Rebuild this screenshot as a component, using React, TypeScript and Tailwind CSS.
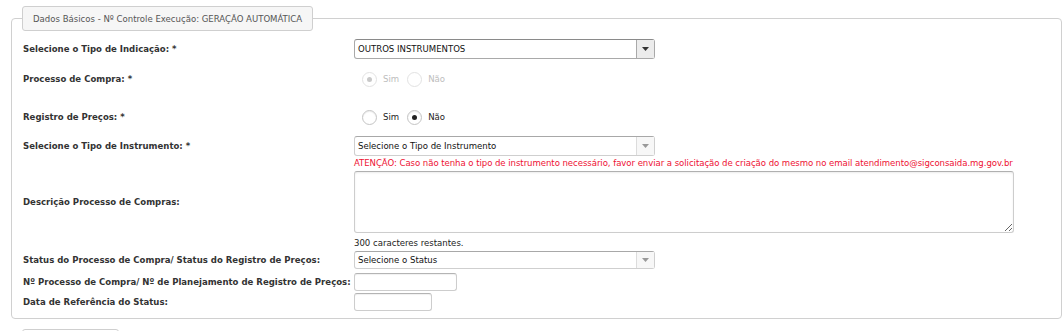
function Radio({ label, checked, disabled }: { label: string; checked?: boolean; disabled?: boolean }) {
    return (
        <label className="flex items-center">
            <span className={`flex h-[15px] w-[15px] items-center justify-center rounded-full border bg-white ${disabled ? 'border-[#e2e2e2]' : 'border-[#c4c4c4] shadow-[inset_0_1px_1px_rgba(0,0,0,0.08)]'}`}>
                {checked && <span className={`h-[5px] w-[5px] rounded-full ${disabled ? 'bg-[#c8c8c8]' : 'bg-[#222]'}`} />}
            </span>
            <span className={`ml-[6px] ${disabled ? 'text-[#bdbdbd]' : 'text-[#222]'}`}>{label}</span>
        </label>
    );
}

function Select({ value, dark }: { value: string; dark?: boolean }) {
    return (
        <div className={`flex h-[20px] w-[301px] items-stretch rounded-[3px] border bg-white ${dark ? 'border-[#a9a9a9] border-t-[#8a8a8a]' : 'border-[#cfcfcf] border-t-[#a8a8a8]'}`}>
            <span className="flex flex-1 items-center pl-[3px] text-[#111]">{value}</span>
            <span className={`flex w-[18px] items-center justify-center border-l ${dark ? 'border-[#a9a9a9] bg-[#ececec]' : 'border-[#dcdcdc] bg-[#f7f7f7]'}`}>
                <svg width="7" height="4" viewBox="0 0 7 4">
                    <path d="M0 0h7L3.5 4z" fill={dark ? '#333' : '#999'} />
                </svg>
            </span>
        </div>
    );
}

function Row({ label, children, className = '' }: { label?: string; children?: React.ReactNode; className?: string }) {
    return (
        <div className={`flex items-center ${className}`}>
            <span className="w-[331px] shrink-0 font-bold text-[#333]">{label}</span>
            <div className="flex items-center">{children}</div>
        </div>
    );
}

export default function App() {
    const inputClass = 'h-[18px] rounded-[3px] border border-[#cdcdcd] border-t-[#b4b4b4] bg-white shadow-[inset_0_1px_1px_rgba(0,0,0,0.06)]';

    return (
        <div className="h-[331px] w-[1062px] overflow-hidden bg-white font-['DejaVu_Sans_Condensed',sans-serif] text-[9.5px] leading-[12px] text-[#333]">
            <fieldset className="mt-[6px] ml-[11px] w-[1051px] rounded-[4px] border border-[#d0d0d0] pl-[11px] pb-[7px]">
                <legend className="-ml-[1px] flex h-[25px] items-center rounded-[3px] border border-[#cfcfcf] bg-[#f6f6f6] px-[10px] text-[#555]">
                    Dados Básicos - Nº Controle Execução: GERAÇÃO AUTOMÁTICA
                </legend>

                <Row label="Selecione o Tipo de Indicação: *" className="mt-[8px] h-[20px]">
                    <Select value="OUTROS INSTRUMENTOS" dark />
                </Row>

                <Row label="Processo de Compra: *" className="mt-[10px] h-[20px]">
                    <div className="ml-[8px] flex items-center gap-[8px]">
                        <Radio label="Sim" checked disabled />
                        <Radio label="Não" disabled />
                    </div>
                </Row>

                <Row label="Registro de Preços: *" className="mt-[18px] h-[20px]">
                    <div className="ml-[8px] flex items-center gap-[8px]">
                        <Radio label="Sim" />
                        <Radio label="Não" checked />
                    </div>
                </Row>

                <Row label="Selecione o Tipo de Instrumento: *" className="mt-[9px] h-[20px]">
                    <Select value="Selecione o Tipo de Instrumento" />
                </Row>

                <Row className="h-[14px]">
                    <span className="whitespace-nowrap tracking-[-0.05px] text-[#ee1133]">
                        ATENÇÃO: Caso não tenha o tipo de instrumento necessário, favor enviar a solicitação de criação do mesmo no email atendimento@sigconsaida.mg.gov.br
                    </span>
                </Row>

                <Row label="Descrição Processo de Compras:" className="mt-[1px]">
                    <textarea className="block h-[62px] w-[660px] rounded-[3px] border border-[#cdcdcd] border-t-[#b0b0b0] bg-white shadow-[inset_0_1px_2px_rgba(0,0,0,0.08)] outline-none" />
                </Row>

                <Row className="mt-[3px] h-[14px]">
                    <span className="text-[#222]">300 caracteres restantes.</span>
                </Row>

                <Row label="Status do Processo de Compra/ Status do Registro de Preços:" className="mt-[1px] h-[18px]">
                    <div className="[&>div]:h-[18px]">
                        <Select value="Selecione o Status" />
                    </div>
                </Row>

                <Row label="Nº Processo de Compra/ Nº de Planejamento de Registro de Preços:" className="mt-[4px] h-[18px]">
                    <div className={`${inputClass} w-[103px]`} />
                </Row>

                <Row label="Data de Referência do Status:" className="mt-[2px] h-[18px]">
                    <div className={`${inputClass} w-[78px]`} />
                </Row>
            </fieldset>

            <div className="mt-[10px] ml-[22px] h-[24px] w-[97px] rounded-[3px] border border-[#cfcfcf] bg-white" />
        </div>
    );
}
